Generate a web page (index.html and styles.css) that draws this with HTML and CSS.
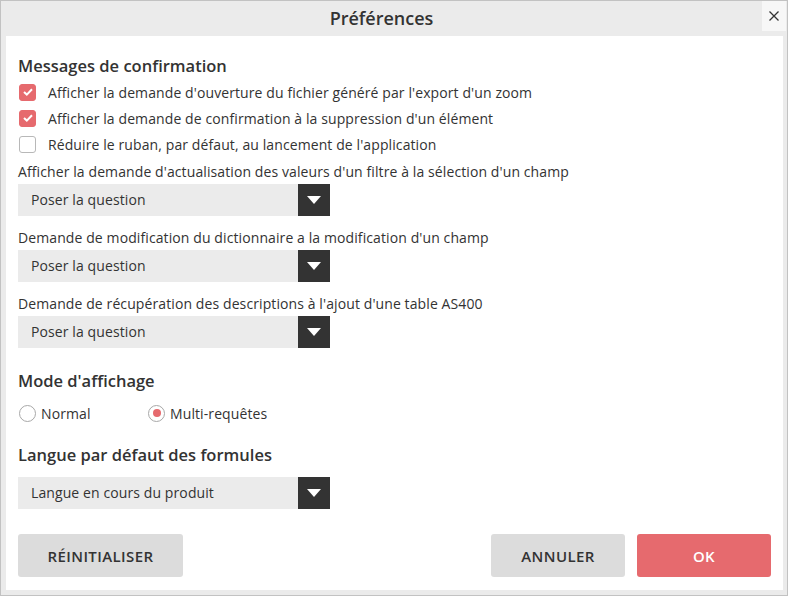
FILE: index.html
```html
<!DOCTYPE html>
<html lang="fr">
<head>
<meta charset="utf-8">
<title>Préférences</title>
<link rel="stylesheet" href="styles.css">
</head>
<body>
<div class="window">
  <div class="titlebar">
    <div class="title">Préférences</div>
    <button class="close" aria-label="Fermer">
      <svg width="10" height="10" viewBox="0 0 10 10"><path d="M0.5 0.5 L9.5 9.5 M9.5 0.5 L0.5 9.5" stroke="#333" stroke-width="1.3" fill="none"/></svg>
    </button>
  </div>
  <div class="content">
    <h2 class="heading">Messages de confirmation</h2>
    <label class="check-row"><span class="box checked"><svg width="10" height="8" viewBox="0 0 10 8"><path d="M1 4 L3.8 6.6 L9 1.2" stroke="#fff" stroke-width="2" fill="none"/></svg></span>Afficher la demande d'ouverture du fichier généré par l'export d'un zoom</label>
    <label class="check-row"><span class="box checked"><svg width="10" height="8" viewBox="0 0 10 8"><path d="M1 4 L3.8 6.6 L9 1.2" stroke="#fff" stroke-width="2" fill="none"/></svg></span>Afficher la demande de confirmation à la suppression d'un élément</label>
    <label class="check-row"><span class="box"></span>Réduire le ruban, par défaut, au lancement de l'application</label>

    <div class="field first">Afficher la demande d'actualisation des valeurs d'un filtre à la sélection d'un champ</div>
    <div class="select"><span class="value">Poser la question</span><span class="arrow"><svg width="14" height="8" viewBox="0 0 14 8"><path d="M0 0 H14 L7 8 Z" fill="#fff"/></svg></span></div>

    <div class="field">Demande de modification du dictionnaire a la modification d'un champ</div>
    <div class="select"><span class="value">Poser la question</span><span class="arrow"><svg width="14" height="8" viewBox="0 0 14 8"><path d="M0 0 H14 L7 8 Z" fill="#fff"/></svg></span></div>

    <div class="field">Demande de récupération des descriptions à l'ajout d'une table AS400</div>
    <div class="select"><span class="value">Poser la question</span><span class="arrow"><svg width="14" height="8" viewBox="0 0 14 8"><path d="M0 0 H14 L7 8 Z" fill="#fff"/></svg></span></div>

    <h2 class="heading h-mode">Mode d'affichage</h2>
    <div class="radios">
      <label class="radio-row r-normal"><span class="radio"></span>Normal</label>
      <label class="radio-row"><span class="radio on"></span>Multi-requêtes</label>
    </div>

    <h2 class="heading h-lang">Langue par défaut des formules</h2>
    <div class="select s-lang"><span class="value">Langue en cours du produit</span><span class="arrow"><svg width="14" height="8" viewBox="0 0 14 8"><path d="M0 0 H14 L7 8 Z" fill="#fff"/></svg></span></div>

    <div class="footer">
      <button class="btn btn-grey btn-reset">RÉINITIALISER</button>
      <div class="right">
        <button class="btn btn-grey">ANNULER</button>
        <button class="btn btn-red">OK</button>
      </div>
    </div>
  </div>
</div>
</body>
</html>
```
FILE: styles.css
```css
* { box-sizing: border-box; }
html, body { margin: 0; padding: 0; }
body {
  width: 788px;
  height: 596px;
  font-family: "Open Sans", "Noto Sans", sans-serif;
  color: #333;
  background: #fff;
}
.window {
  width: 788px;
  height: 596px;
  border: 1px solid #c2c2c2;
  background: #ebebeb;
  display: flex;
  flex-direction: column;
}
.titlebar {
  height: 35px;
  flex: none;
  display: flex;
  align-items: center;
  padding-right: 25px;
  position: relative;
}
.title {
  flex: 1;
  text-align: center;
  font-size: 18px;
  font-weight: 600;
  color: #333;
  margin-top: -2px;
}
.close {
  position: absolute;
  top: 0;
  right: 1px;
  width: 24px;
  height: 30px;
  border: none;
  padding: 0;
  background: #f7f7f7;
  display: flex;
  align-items: center;
  justify-content: center;
}
.content {
  flex: 1;
  background: #fff;
  margin: 0 4px 5px 5px;
  padding: 18px 12px 0 12px;
  display: flex;
  flex-direction: column;
  font-size: 14px;
  letter-spacing: 0.1px;
}
.heading {
  margin: 0;
  height: 24px;
  line-height: 24px;
  font-size: 16.5px;
  font-weight: 600;
  letter-spacing: 0;
  color: #333;
}
.check-row {
  height: 26px;
  display: flex;
  align-items: center;
  gap: 12px;
}
.check-row:first-of-type { margin-top: 1px; }
.box {
  width: 17px;
  height: 17px;
  border: 1px solid #b8b8b8;
  border-radius: 3px;
  display: flex;
  align-items: center;
  justify-content: center;
  margin-left: 1px;
  flex: none;
}
.box.checked {
  background: #e66a6e;
  border-color: #e66a6e;
}
.field {
  height: 20px;
  line-height: 20px;
  margin-top: 12px;
}
.field.first { margin-top: 5px; }
.select {
  margin-top: 2px;
  width: 312px;
  height: 32px;
  display: flex;
  background: #ebebeb;
}
.select .value {
  flex: 1;
  line-height: 32px;
  padding-left: 13px;
}
.select .arrow {
  width: 32px;
  background: #333;
  display: flex;
  align-items: center;
  justify-content: center;
}
.h-mode { margin-top: 21px; }
.radios {
  margin-top: 7px;
  height: 26px;
  display: flex;
  align-items: center;
}
.radio-row {
  display: flex;
  align-items: center;
  gap: 5px;
}
.r-normal { width: 129px; }
.radio {
  width: 17px;
  height: 17px;
  border: 1px solid #a8a8a8;
  border-radius: 50%;
  margin-left: 1px;
  display: flex;
  align-items: center;
  justify-content: center;
}
.radio.on::after {
  content: "";
  width: 8px;
  height: 8px;
  border-radius: 50%;
  background: #e66a6e;
}
.h-lang { margin-top: 17px; }
.s-lang { margin-top: 10px; }
.footer {
  margin-top: 25px;
  display: flex;
  justify-content: space-between;
}
.right { display: flex; gap: 12px; }
.btn {
  height: 43px;
  width: 134px;
  border: none;
  border-radius: 3px;
  font-family: inherit;
  font-size: 15px;
  font-weight: 600;
  letter-spacing: 0.4px;
  color: #333;
}
.btn-reset { width: 165px; }
.btn-grey { background: #dcdcdc; }
.btn-red { background: #e66a6e; color: #fff; }
```
